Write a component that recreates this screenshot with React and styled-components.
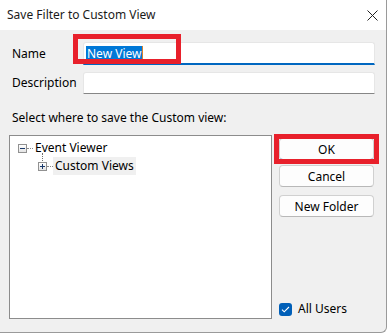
import React from "react";
import styled, { createGlobalStyle } from "styled-components";

const GlobalStyle = createGlobalStyle`
  html, body {
    margin: 0;
    padding: 0;
    background: #ffffff;
  }
  body {
    font-family: "Noto Sans", "Open Sans", sans-serif;
    font-size: 12px;
    color: #000000;
  }
`;

const Window = styled.div`
  width: 386px;
  height: 332px;
  background: #f0f0f0;
  border-right: 1px solid #9a9a9a;
  border-bottom: 1px solid #9a9a9a;
  border-bottom-right-radius: 6px;
  display: flex;
  flex-direction: column;
  overflow: hidden;
`;

const TitleBar = styled.div`
  height: 30px;
  flex: none;
  background: #ffffff;
  display: flex;
  align-items: center;
  justify-content: space-between;
  padding: 0 8px 0 7px;
`;

const Title = styled.span`
  font-size: 12px;
  line-height: 16px;
  color: #1a1a1a;
`;

const Form = styled.div`
  display: grid;
  grid-template-columns: 71px 292px;
  row-gap: 7px;
  padding: 12px 0 0 12px;
  align-items: center;
`;

const Label = styled.span`
  font-size: 12px;
  line-height: 16px;
`;

const Field = styled.div`
  position: relative;
  box-sizing: border-box;
  height: ${(p) => (p.$focused ? "23px" : "22px")};
  background: #ffffff;
  border: 1px solid #e6e6e6;
  border-bottom: ${(p) => (p.$focused ? "2px solid #0067c0" : "1px solid #868686")};
  border-radius: 3px 3px 0 0;
  padding: 1px 2px 0;
  display: flex;
  align-items: center;
`;

const Selected = styled.span`
  background: #0078d7;
  color: #ffffff;
  line-height: 16px;
  padding: 0 1px;
`;

const Caret = styled.span`
  display: inline-block;
  width: 1px;
  height: 15px;
  background: #d9822b;
`;

const Highlight = styled.div`
  position: absolute;
  left: ${(p) => p.$left}px;
  top: ${(p) => p.$top}px;
  width: ${(p) => p.$width}px;
  height: ${(p) => p.$height}px;
  box-sizing: border-box;
  border: 5px solid #e8202b;
  pointer-events: none;
  z-index: 2;
`;

const Lower = styled.div`
  display: grid;
  grid-template-columns: 263px 95px;
  grid-template-rows: auto 184px;
  column-gap: 7px;
  row-gap: 9px;
  padding: 16px 0 0 9px;
`;

const SectionLabel = styled.span`
  grid-column: 1 / 3;
  padding-left: 3px;
  line-height: 16px;
`;

const TreeBox = styled.div`
  box-sizing: border-box;
  background: #ffffff;
  border: 1px solid #8c8c8c;
  padding: 3px 0 0 8px;
`;

const TreeRow = styled.div`
  display: flex;
  align-items: center;
  height: 18px;
  padding-left: ${(p) => p.$indent}px;
`;

const Expander = styled.span`
  position: relative;
  box-sizing: border-box;
  width: 9px;
  height: 9px;
  border: 1px solid #919191;
  background: linear-gradient(#ffffff, #e4e4e4);
  display: flex;
  align-items: center;
  justify-content: center;
  flex: none;

  &::before {
    content: "";
    display: ${(p) => (p.$child ? "block" : "none")};
    position: absolute;
    left: 3px;
    top: -10px;
    height: 8px;
    border-left: 1px dotted #6e6e6e;
  }
`;

const HDots = styled.span`
  width: 6px;
  border-top: 1px dotted #8a8a8a;
  flex: none;
`;

const NodeText = styled.span`
  line-height: 16px;
  padding: 1px 2px;
  background: ${(p) => (p.$selected ? "#f0f0f0" : "transparent")};
`;

const Side = styled.div`
  display: flex;
  flex-direction: column;
  padding: 3px 0 2px;
`;

const Button = styled.button`
  position: relative;
  box-sizing: border-box;
  height: 22px;
  margin-top: ${(p) => p.$space || 0}px;
  background: #fdfdfd;
  border: 1px solid #d0d0d0;
  border-bottom-color: ${(p) => (p.$primary ? "#5a8fcf" : "#b8b8b8")};
  border-radius: 4px;
  font-family: inherit;
  font-size: 12px;
  font-weight: 400;
  color: #000000;
  padding: 0;
`;

const CheckRow = styled.label`
  margin-top: auto;
  display: flex;
  align-items: center;
  gap: 6px;
  line-height: 16px;
`;

const CheckBox = styled.span`
  width: 13px;
  height: 13px;
  border-radius: 3px;
  background: #005fb8;
  display: flex;
  align-items: center;
  justify-content: center;
`;

const Sign = ({ plus }) => (
  <svg width="5" height="5" viewBox="0 0 5 5">
    <path d="M0 2.5h5" stroke="#1b3a6b" strokeWidth="1" />
    {plus && <path d="M2.5 0v5" stroke="#1b3a6b" strokeWidth="1" />}
  </svg>
);

export default function App() {
  return (
    <>
      <GlobalStyle />
      <Window>
        <TitleBar>
          <Title>Save Filter to Custom View</Title>
          <svg width="11" height="11" viewBox="0 0 11 11">
            <path d="M0.5 0.5l10 10M10.5 0.5l-10 10" stroke="#222" strokeWidth="1" />
          </svg>
        </TitleBar>
        <Form>
          <Label>Name</Label>
          <Field $focused>
            <Selected>New View</Selected>
            <Caret />
            <Highlight $left={-11} $top={-9} $width={108} $height={30} />
          </Field>
          <Label>Description</Label>
          <Field />
        </Form>
        <Lower>
          <SectionLabel>Select where to save the Custom view:</SectionLabel>
          <TreeBox>
            <TreeRow $indent={0}>
              <Expander>
                <Sign />
              </Expander>
              <HDots />
              <NodeText>Event Viewer</NodeText>
            </TreeRow>
            <TreeRow $indent={20}>
              <Expander $child>
                <Sign plus />
              </Expander>
              <HDots />
              <NodeText $selected>Custom Views</NodeText>
            </TreeRow>
          </TreeBox>
          <Side>
            <Button $primary>
              OK
              <Highlight $left={-6} $top={-5} $width={105} $height={30} />
            </Button>
            <Button $space={5}>Cancel</Button>
            <Button $space={8}>New Folder</Button>
            <CheckRow>
              <CheckBox>
                <svg width="9" height="7" viewBox="0 0 9 7">
                  <path d="M1 3.6l2.2 2.2L8 1" fill="none" stroke="#fff" strokeWidth="1.1" />
                </svg>
              </CheckBox>
              All Users
            </CheckRow>
          </Side>
        </Lower>
      </Window>
    </>
  );
}
